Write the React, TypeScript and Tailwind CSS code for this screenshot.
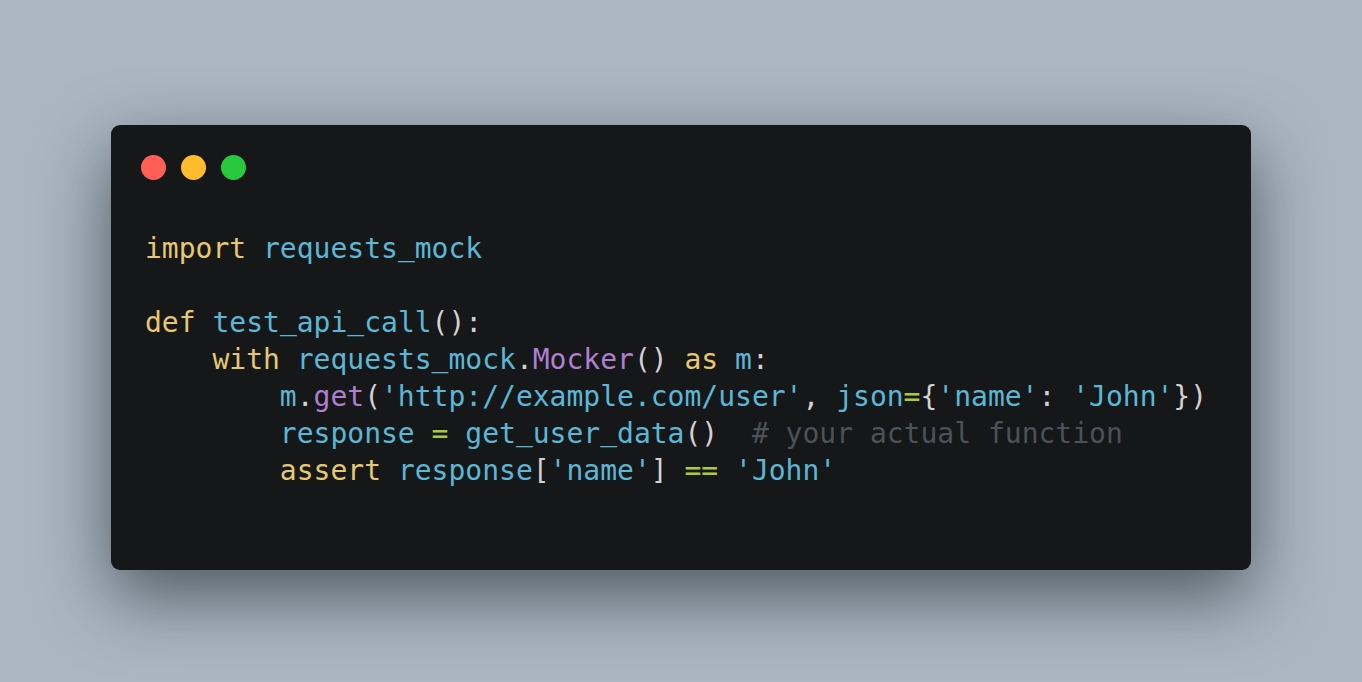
import React from 'react';

type Token = { t: string; c?: string };

const kw = 'text-[#e6c873]';
const id = 'text-[#5cb7d6]';
const fn = 'text-[#b07fd0]';
const op = 'text-[#a9c83c]';
const pn = 'text-[#d2d2d2]';
const cm = 'text-[#4b5258]';

const lines: Token[][] = [
  [{ t: 'import', c: kw }, { t: ' ' }, { t: 'requests_mock', c: id }],
  [],
  [
    { t: 'def', c: kw },
    { t: ' ' },
    { t: 'test_api_call', c: id },
    { t: '():', c: pn },
  ],
  [
    { t: '    ' },
    { t: 'with', c: kw },
    { t: ' ' },
    { t: 'requests_mock', c: id },
    { t: '.', c: pn },
    { t: 'Mocker', c: fn },
    { t: '()', c: pn },
    { t: ' ' },
    { t: 'as', c: kw },
    { t: ' ' },
    { t: 'm', c: id },
    { t: ':', c: pn },
  ],
  [
    { t: '        ' },
    { t: 'm', c: id },
    { t: '.', c: pn },
    { t: 'get', c: fn },
    { t: '(', c: pn },
    { t: "'http://example.com/user'", c: id },
    { t: ', ', c: pn },
    { t: 'json', c: id },
    { t: '=', c: op },
    { t: '{', c: pn },
    { t: "'name'", c: id },
    { t: ': ', c: pn },
    { t: "'John'", c: id },
    { t: '})', c: pn },
  ],
  [
    { t: '        ' },
    { t: 'response', c: id },
    { t: ' ' },
    { t: '=', c: op },
    { t: ' ' },
    { t: 'get_user_data', c: id },
    { t: '()', c: pn },
    { t: '  ' },
    { t: '# your actual function', c: cm },
  ],
  [
    { t: '        ' },
    { t: 'assert', c: kw },
    { t: ' ' },
    { t: 'response', c: id },
    { t: '[', c: pn },
    { t: "'name'", c: id },
    { t: ']', c: pn },
    { t: ' ' },
    { t: '==', c: op },
    { t: ' ' },
    { t: "'John'", c: id },
  ],
];

function Word({ text }: { text: string }) {
  const parts = text.split('_');
  return (
    <>
      {parts.map((p, k) => (
        <React.Fragment key={k}>
          {k > 0 && <span className="relative top-[-3px]">_</span>}
          {p}
        </React.Fragment>
      ))}
    </>
  );
}

export default function App() {
  return (
    <div className="w-full h-[682px] bg-[#aab6c2] pt-[125px] px-[111px] overflow-hidden">
      <div className="h-[445px] rounded-[9px] bg-[#161719] shadow-[0_26px_70px_rgba(20,28,36,0.6)]">
        <div className="flex gap-[15px] pt-[30px] pl-[30px]">
          <span className="w-[25px] h-[25px] rounded-full bg-[#ff5f56]" />
          <span className="w-[25px] h-[25px] rounded-full bg-[#ffbd2e]" />
          <span className="w-[25px] h-[25px] rounded-full bg-[#27c93f]" />
        </div>
        <pre className="mt-[50px] pl-[34px] text-[28px] leading-[37px] text-[#d2d2d2] font-['DejaVu_Sans_Mono',monospace]">
          {lines.map((line, i) => (
            <div key={i} className="min-h-[37px]">
              {line.map((tok, j) => (
                <span key={j} className={tok.c}>
                  <Word text={tok.t} />
                </span>
              ))}
            </div>
          ))}
        </pre>
      </div>
    </div>
  );
}
